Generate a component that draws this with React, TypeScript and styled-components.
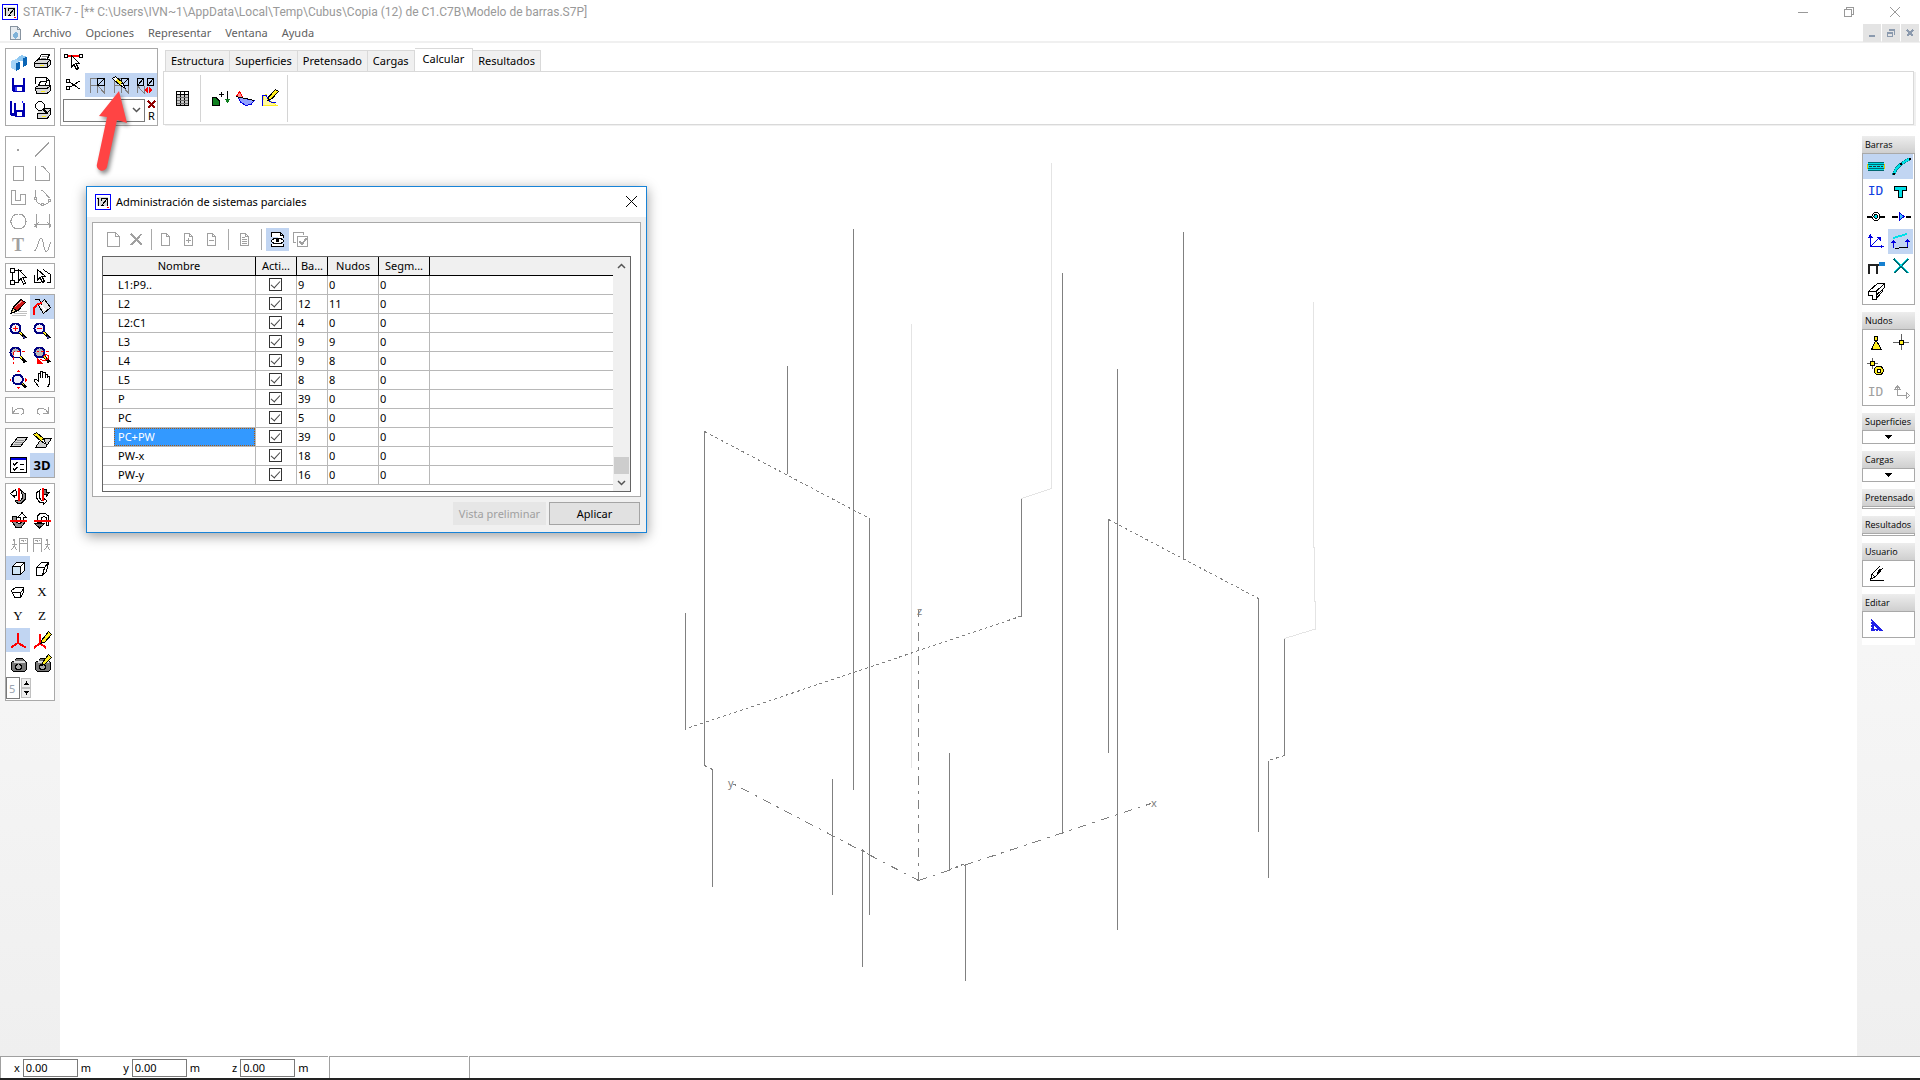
import React, { useState } from "react";
import styled, { createGlobalStyle, css } from "styled-components";

const GREY = "#a0a0a0";
const NAVY = "#000080";
const BLUE = "#0000e0";
const HILITE = "#c1d5f2";

const Global = createGlobalStyle`
  * { box-sizing: border-box; }
  body { margin: 0; background: #fff; color: #000; font: 11px/16px "Noto Sans", "Open Sans", sans-serif; }
  button, input, select { font: inherit; color: inherit; margin: 0; padding: 0; border: 0; background: none; border-radius: 0; }
  h1, h2 { margin: 0; font: inherit; }
  svg { display: block; }
`;

/* ---------- layout ---------- */
const Screen = styled.div`
  position: relative;
  display: flex;
  flex-direction: column;
  min-height: 100vh;
`;
const TitleBar = styled.header`
  display: flex;
  align-items: center;
  gap: 5px;
  height: 23px;
  padding: 0 17px 0 2px;
  color: #999;
  h1 { flex: 1; font-family: Roboto, "Noto Sans", sans-serif; font-size: 12px; }
`;
const WindowButtons = styled.div`
  display: flex;
  gap: 30px;
  button { width: 16px; height: 20px; display: grid; place-items: center; }
`;
const MenuBar = styled.nav`
  display: flex;
  align-items: center;
  height: 20px;
  padding: 1px 1px 0 8px;
  border-bottom: 2px solid #f0f0f0;
  color: #606060;
`;
const MenuItem = styled.button`
  padding: 1px 7px 0;
`;
const ChildButtons = styled.div`
  display: flex;
  gap: 1px;
  margin-left: auto;
  button { width: 18px; height: 18px; background: #e4e4e4; display: grid; place-items: center; }
`;
const Ribbon = styled.div`
  display: flex;
  padding: 5px 4px 0 5px;
  gap: 5px;
`;
const Panel = styled.div<{ $cols?: number }>`
  display: grid;
  grid-template-columns: repeat(${(p) => p.$cols ?? 2}, 24px);
  grid-auto-rows: 24px;
  align-content: start;
  border: 1px solid #a9a9a9;
  background: #fff;
`;
const RibbonPanel = styled(Panel)`
  height: 78px;
`;
const Tool = styled.button<{ $on?: boolean; $w?: number; $h?: number }>`
  display: grid;
  place-items: center;
  width: ${(p) => p.$w ?? 24}px;
  height: ${(p) => p.$h ?? 24}px;
  background: ${(p) => (p.$on ? HILITE : "transparent")};
`;
const ComboRow = styled.div`
  grid-column: 1 / -1;
  display: flex;
  padding: 2px 1px 0 2px;
  gap: 2px;
`;
const Combo = styled.label`
  position: relative;
  width: 83px;
  height: 23px;
  select { appearance: none; width: 100%; height: 100%; border: 1px solid #7a7a7a; background: #fff; }
  svg { position: absolute; right: 4px; top: 8px; pointer-events: none; }
`;
const MiniStack = styled.div`
  display: flex;
  flex-direction: column;
  button { width: 9px; height: 11px; display: grid; place-items: center; line-height: 11px; }
`;
const Tabbed = styled.section`
  flex: 1;
  display: flex;
  flex-direction: column;
`;
const TabList = styled.div`
  display: flex;
  align-items: flex-end;
  height: 23px;
  padding-left: 2px;
`;
const Tab = styled.button<{ $active: boolean }>`
  padding: 0 5px;
  line-height: 20px;
  height: 21px;
  border: 1px solid #d9d9d9;
  border-left-width: 0;
  border-bottom: 0;
  background: #f0f0f0;
  white-space: nowrap;
  &:first-child { border-left-width: 1px; }
  ${(p) => p.$active && css`
    height: 24px;
    margin-bottom: -1px;
    padding: 0 8px 3px;
    background: #fff;
  `}
`;
const TabPane = styled.div`
  display: flex;
  align-items: center;
  height: 54px;
  padding-left: 6px;
  margin-right: 2px;
  border: 1px solid #d9d9d9;
  box-shadow: 2px 1px 0 #f0f0f0;
`;
const PaneRule = styled.span`
  width: 1px;
  height: 47px;
  margin: 0 8px 0 6px;
  background: #d4d4d4;
`;
const Work = styled.main`
  flex: 1;
  display: flex;
  min-height: 0;
  background: linear-gradient(#fff, #efefef);
`;
const LeftBar = styled.aside`
  display: flex;
  flex-direction: column;
  gap: 5px;
  padding: 10px 5px;
`;
const Canvas = styled.section`
  flex: 1;
  position: relative;
  background: #fff;
  > svg { position: absolute; inset: 0; width: 100%; height: 100%; }
`;
const RightBar = styled.aside`
  padding: 10px 5px;
`;
const RightStack = styled.div`
  display: flex;
  flex-direction: column;
  gap: 7px;
  width: 53px;
  padding-bottom: 7px;
  background: #fff;
`;
const GroupTitle = styled.h2`
  height: 17px;
  padding-left: 3px;
  font-family: "Open Sans", sans-serif;
  font-size: 9px;
  line-height: 17px;
  background: linear-gradient(#ededed, #cfcfcf);
`;
const GroupBody = styled.div`
  display: flex;
  flex-wrap: wrap;
  min-height: 3px;
  border: 1px solid #a9a9a9;
`;
const RightTool = styled(Tool)`
  width: 25px;
  height: 25px;
  align-items: start;
`;
const Expand = styled.button`
  width: 100%;
  height: 12px;
  display: grid;
  place-items: center;
`;
const Letter = styled.span<{ $c?: string; $s?: number; $f?: string; $b?: boolean }>`
  color: ${(p) => p.$c ?? "#000"};
  font-family: ${(p) => p.$f ?? '"Liberation Serif"'}, serif;
  font-size: ${(p) => p.$s ?? 13}px;
  font-weight: ${(p) => (p.$b ? 700 : 400)};
  line-height: 24px;
`;
const Spinner = styled.div`
  grid-column: 1 / -1;
  display: flex;
  align-items: center;
  gap: 1px;
  input { width: 14px; height: 22px; border: 1px solid #7a7a7a; padding-left: 2px; color: #9aa4b0; }
  div { display: flex; flex-direction: column; }
  button { width: 10px; height: 10px; border: 1px solid #c0c0c0; background: #eee; display: grid; place-items: center; }
`;

/* ---------- status bar ---------- */
const Status = styled.footer`
  display: flex;
  height: 24px;
  gap: 1px;
  background: #fff;
  border-bottom: 2px solid #222;
`;
const StatusCell = styled.div<{ $w?: number }>`
  display: flex;
  align-items: center;
  gap: 32px;
  ${(p) => (p.$w ? `width: ${p.$w}px;` : "flex: 1;")}
  padding-left: 13px;
  border-top: 1px solid #a0a0a0;
  border-left: 1px solid #a0a0a0;
`;
const Coord = styled.label`
  display: flex;
  align-items: center;
  gap: 3px;
  input { width: 55px; height: 18px; border: 1px solid #7a7a7a; padding-left: 2px; }
`;

/* ---------- dialog ---------- */
const Dialog = styled.section`
  position: absolute;
  left: 86px;
  top: 186px;
  width: 561px;
  border: 1px solid #1883d7;
  background: #f0f0f0;
  box-shadow: 0 3px 12px rgba(0, 0, 0, 0.4);
`;
const DialogTitle = styled.header`
  display: flex;
  align-items: center;
  gap: 5px;
  height: 30px;
  padding: 0 8px 1px;
  background: #fff;
  h2 { flex: 1; }
`;
const DialogGroup = styled.div`
  margin: 5px;
  padding: 5px 9px 4px;
  border: 1px solid #a9a9a9;
  background: #fff;
`;
const DialogTools = styled.div`
  display: flex;
  align-items: center;
  height: 28px;
  padding-bottom: 5px;
`;
const DialogRule = styled.span<{ $tight?: boolean }>`
  width: 1px;
  height: 21px;
  margin: ${(p) => (p.$tight ? "0 2px 0 3px" : "0 4px 0 5px")};
  background: #a9a9a9;
`;
const Grid = styled.div`
  display: flex;
  height: 236px;
  border: 1px solid #646464;
`;
const Table = styled.table`
  flex: 1;
  align-self: flex-start;
  table-layout: fixed;
  border-collapse: separate;
  border-spacing: 0;
  th, td { padding: 0; border-right: 1px solid #b8b8b8; border-bottom: 1px solid #b8b8b8; height: 19px; line-height: 16px; font-weight: 400; text-align: left; white-space: nowrap; overflow: hidden; }
  thead th { background: #f0f0f0; border-color: #000; text-align: center; line-height: 18px; }
  th:last-child, td:last-child { border-right: 0; }
  td { padding: 1px 0 0 1px; vertical-align: top; }
`;
const NameCell = styled.td<{ $sel: boolean }>`
  && { padding: 0 0 0 11px; }
  span { display: block; height: 18px; line-height: 16px; padding-left: 3px; border: 1px solid transparent; }
  ${(p) => p.$sel && css`
    span { background: #3399ff; color: #fff; border: 1px dotted #a85a10; }
  `}
`;
const CheckCell = styled.td`
  && { padding: 2px 1px 0 0; }
`;
const Check = styled.input`
  && { margin: 0 auto; }
  appearance: none;
  display: grid;
  place-items: center;
  width: 13px;
  height: 13px;
  border: 1px solid #333;
  background: #fff;
  &:checked::after {
    content: "";
    width: 4px;
    height: 8px;
    margin-top: -2px;
    border: solid #444;
    border-width: 0 1px 1px 0;
    transform: rotate(42deg);
  }
`;
const Scroll = styled.div`
  display: flex;
  flex-direction: column;
  width: 17px;
  background: #f0f0f0;
  button { height: 17px; display: grid; place-items: center; }
`;
const Thumb = styled.span`
  width: 15px;
  height: 17px;
  margin: auto 1px 0;
  background: #cdcdcd;
`;
const DialogFoot = styled.footer`
  display: flex;
  justify-content: flex-end;
  gap: 3px;
  padding: 0 6px 7px;
`;
const PushButton = styled.button`
  width: 91px;
  height: 23px;
  border: 1px solid #a4a4a4;
  background: #e1e1e1;
  &:disabled { width: 93px; color: #a0a0a0; background: #e6e6e6; border-color: #e6e6e6; }
`;
const Pointer = styled.svg`
  position: absolute;
  left: 90px;
  top: 84px;
  pointer-events: none;
  filter: drop-shadow(2px 3px 2px rgba(0, 0, 0, 0.45));
`;

/* ---------- drawing helpers ---------- */
type Shape = [d: string, stroke?: string, fill?: string, width?: number];
const Draw = ({ s, size = 24, w, h }: { s: Shape[]; size?: number; w?: number; h?: number }) => (
  <svg width={w ?? size} height={h ?? size} viewBox={`0 0 ${w ?? size} ${h ?? size}`} shapeRendering="crispEdges" aria-hidden="true">
    {s.map(([d, stroke = "#000", fill = "none", width = 1], i) => (
      <path key={i} d={d} stroke={stroke} fill={fill} strokeWidth={width} />
    ))}
  </svg>
);

const K = "#000";
const W = "#fff";
const Y = "#ffee20";
const R = "#ff0000";
const C = "#00e0e8";

const printer: Shape[] = [
  ["M8.5 10.5L11.5 5.5H19.5L17 10.5", K, W],
  ["M12 7.5H18M11 9.5H16", "#888"],
  ["M4.5 13.5L8 10.5H19.5L20.5 12.5V15.5L17 18.5H5.5L4.5 17Z", K, "#d8d8d8"],
  ["M5 14.5H16.5L19.5 11.5", K],
  ["M10 16.5H14", Y, "none", 1],
  ["M17.5 14V18", K],
];
const pagePrinter: Shape[] = [
  ["M5.5 11V4.5H16.5L19.5 7.5V12", K, W],
  ["M16.5 4.5V7.5H19.5", K],
  ["M8.5 12.5L10.5 8.5H16.5L15 12.5", K, W],
  ["M5.5 14.5L9 12.5H20.5V17.5L17 20.5H6.5Z", K, "#d8d8d8"],
  ["M6 15.5H17L20 13", K],
  ["M11 18.5H15", Y],
];
const zoomPrinter: Shape[] = [
  ["M10 11.5H20.5V17.5L17 21.5H7.5V16", K, "#d8d8d8"],
  ["M8 16.5H17L20 13", K],
  ["M12 19.5H16", Y],
  ["M8.5 4.5H11.5L14.5 7.5V10.5L11.5 13.5H8.5L5.5 10.5V7.5Z", K, W],
  ["M13 12L17 16", K, "none", 2],
];
const save: Shape[] = [
  ["M6 5H8V12H17V5H19V19H7L6 18Z", "none", "#0000b0"],
  ["M9 14H16V18H9Z", "none", W],
  ["M9 14H11V18H9Z", "none", "#4040ff"],
];
const saveAll: Shape[] = [
  ["M4 4H6V16H8V19H6L4 18Z", "none", "#0000b0"],
  ["M8 6H10V13H17V6H19V20H9L8 19Z", "none", "#0000b0"],
  ["M11 15H16V19H11Z", "none", W],
  ["M16.5 4V6", "#2020ff"],
];
const model: Shape[] = [
  ["M11 9L16 6L21 8V16H17V12L11 12Z", "none", "#8fc8f2"],
  ["M5 12L10 10L14 13V18L9 21L5 19Z", "none", "#a5d4f7"],
  ["M17 9L21 8V16L17 18Z", "none", "#0b65b5"],
  ["M10 14L14 13V20L10 22Z", "none", "#0b65b5"],
];
const cutBar: Shape[] = [
  ["M6 7H19", R, "none", 2],
  ["M3.5 5.5H6.5V8.5H3.5ZM18.5 5.5H21.5V8.5H18.5Z", K, W],
  ["M10.5 6.5V18L13 15.5L15.5 20.5L17.5 19.5L15 14.5H18.5Z", K, W],
];
const scissors: Shape[] = [
  ["M8.5 9L19.5 16.5M8.5 14.5L19.5 7.5", K],
  ["M5.5 6.5H8.5V9.5H5.5ZM5.5 13.5H8.5V16.5H5.5Z", K],
];
const partial: Shape[] = [
  ["M5.5 20V5.5H12M5.5 12.5H12M12.5 12V20M13 13L19.5 20V13", "#808080"],
  ["M12.5 5.5H19.5V12.5H12.5ZM12.5 12.5L19.5 5.5", K],
];
const pencilTL: Shape[] = [
  ["M3.5 5.5L6.5 3.5L13.5 9.5L11.5 12.5Z", K, Y],
  ["M4 5.5L6.5 4L8 6L6 8Z", "none", W],
  ["M11.5 12.5L16 15L13.5 9.5", K, W],
];
const swap: Shape[] = [
  ["M4.5 5.5H10.5V12.5H4.5ZM4.5 12.5L10.5 5.5M14.5 5.5H20.5V12.5H14.5ZM14.5 12.5L20.5 5.5", K],
  ["M4.5 13V20M4.5 13L11 20V13", "#808080"],
  ["M15 14V20L11 17ZM16 14V20L20 17Z", "none", R],
];
const tableIcon: Shape[] = [
  ["M6.5 5.5H18.5V19.5H6.5Z", K, "#c8c8c8"],
  ["M7 6H18V8H7Z", "none", W],
  ["M6 8.5H19M10.5 5V20M14.5 5V20", K],
  ["M7 11.5H18M7 14.5H18M7 17.5H18", "#707070"],
];
const load: Shape[] = [
  ["M3.5 19.5V11.5H7L10.5 15V19.5Z", K, "#108020"],
  ["M9.5 8.5H14.5M12 6V11", K],
  ["M18.5 5V13", K],
  ["M16 13H21L18.5 16Z", "#108020", "#108020"],
];
const moment: Shape[] = [
  ["M3.5 10.5L6.5 5.5L10.5 12.5Z", R, "#ff9090"],
  ["M5 11L21 14.5L18 18.5L13 19.5L8 16.5Z", BLUE, "#90a0ff"],
  ["M3 10.5L21.5 14.5", K],
];
const graph: Shape[] = [
  ["M5.5 19.5L6.5 9.5L9 8.5L11 14L15 16L20 19.5Z", Y, "#fff9a0"],
  ["M5.5 20V9.5H9.5L11.5 14.5L15 16.5L19 17", BLUE],
  ["M18.5 3.5L21.5 5.5L15 12.5L11 14.5L12 10.5Z", K, Y],
];

const gpoint: Shape[] = [["M11 12H13V14H11Z", "none", GREY]];
const gline: Shape[] = [["M5 19.5L19 5.5", GREY]];
const grect: Shape[] = [["M7.5 5.5H17.5V19.5H7.5Z", GREY]];
const gpoly: Shape[] = [["M5.5 5V19.5H19.5V12.5L13 5.5H11", GREY]];
const gU: Shape[] = [["M5.5 5.5H9.5V15.5H14.5V9.5H19.5V19.5H5.5Z", GREY]];
const garc: Shape[] = [
  ["M5.5 5V13M6 15C7 18 9 19.5 12.5 19.5C17 19.5 19.5 18 19.5 15M19.5 13L12.5 5.5H11", GREY],
  ["M4.5 12.5H6.5V14.5H4.5ZM11.5 18.5H13.5V20.5H11.5ZM18.5 14.5H20.5V16.5H18.5Z", GREY, W],
];
const gcircle: Shape[] = [["M12.5 5A7.5 7.5 0 1 1 12.4 5Z", GREY]];
const gdim: Shape[] = [["M6.5 5V19M19.5 5V19M4 15.5H21M4.5 18L8.5 13.5M17.5 13.5L21 17.5", GREY]];
const gwave: Shape[] = [["M4.5 18C8 16 8 5.5 11 5.5C14 5.5 13 18.5 16.5 18.5C18.5 18.5 19 12 20.5 9.5", GREY]];

const arrowCur = "M12.5 5.5V17L15 14.5L17.5 20L19.5 19L17 13.5H20.5Z";
const nodeSel: Shape[] = [
  ["M6.5 8V16M8 6.5H16M8 18.5H13", K],
  ["M4.5 4.5H8.5V8.5H4.5ZM4.5 16.5H8.5V20.5H4.5Z", K, W],
  [arrowCur, K, W],
];
const polySel: Shape[] = [
  ["M4.5 11V18.5H11M13 5.5L20.5 10.5V18.5H17", K],
  ["M7.5 5.5V16L10 13.5L12.5 18.5L14.5 17.5L12 12.5H15.5Z", K, W],
];
const redPen: Shape[] = [
  ["M6 20.5H20M8 18.5H21M12 16.5H21", "#c0c0c0"],
  ["M5 18L7.5 12L15 4.5L19.5 7.5L12 15.5Z", K, "#d01818"],
  ["M9 12L15.5 6", "#ff9a9a"],
  ["M5 18.5L7 13L11 16Z", K, "#f3d9a5"],
];
const bucket: Shape[] = [
  ["M8.5 10.5L14.5 4.5L20.5 12.5L13.5 18.5Z", K, "#e8e8e8"],
  ["M11 10L15 15", W, "none", 2],
  ["M4.5 4.5H9L12 9.5", K],
  ["M4 20V13L7 9.5L12 8", R, "none", 2],
];
const lens: Shape[] = [
  ["M9.5 4.5A5 5 0 1 1 9.4 4.5Z", NAVY, "#f0f0fa", 2],
  ["M14 13.5L19.5 19.5", K, "none", 3],
  ["M13.5 13L16 15.5", Y, "none", 1],
  ["M17 17.5L19 19.5", "#4040a0", "none", 1],
];
const zin: Shape[] = [...lens, ["M7 9.5H12M9.5 7V12", R]];
const zout: Shape[] = [...lens, ["M7 9.5H12", R]];
const lensGrey: Shape[] = [
  ["M9.5 4.5A5 5 0 1 1 9.4 4.5Z", NAVY, "#b8b8b8", 2],
  ["M14 13.5L19.5 19.5", K, "none", 3],
  ["M13.5 13L16 15.5", Y],
];
const zwin: Shape[] = [...lensGrey, ["M8 9H14V14H8Z", "none", W], ["M7.5 8.5H9M11 8.5H14M16 8.5H19M7.5 9V12M7.5 14V17M7.5 19V21", R]];
const zprev: Shape[] = [...lensGrey, ["M7 8.5H9M11 8.5H14M16 8.5H19", R], ["M7 15V20H12Z", R, R], ["M10 16C14 19 20 16 18.5 13C17 11 14 12 13 14", R]];
const zall: Shape[] = [
  ["M12 7.5A5 5 0 1 1 11.9 7.5Z", NAVY, "#f0f0fa", 2],
  ["M16 16.5L20 20.5", K, "none", 3],
  ["M16 16L18 18", Y],
  ["M10 5H14L12 3ZM10 20H14L12 22ZM5 11V15L3 13ZM19 11V15L21 13Z", "none", R],
];
const hand: Shape[] = [
  ["M9.5 20.5L4.5 14.5V12.5H6.5L8.5 14.5V6.5H10.5V11V4.5H12.5V11V5.5H15.5V11V7.5H17.5V11V9.5H19.5V16.5L17.5 20.5", K, W],
];
const undo: Shape[] = [["M6.5 9V15.5H12.5M7 15L9 12L12 10.5H16L17.5 12V15L15 16.5", GREY]];
const redo: Shape[] = [["M18.5 9V15.5H12.5M18 15L16 12L13 10.5H9L7.5 12V15L10 16.5", GREY]];
const plane: Shape[] = [
  ["M4.5 17.5L11.5 8.5H21.5L14.5 17.5Z", K, "#d8d8d8"],
  ["M8 15.5H15M9 13.5H17M11 11.5H18", "#909090"],
];
const planePen: Shape[] = [
  ["M5.5 18.5L11.5 9.5H21.5L15.5 18.5Z", K, "#d0d0d0"],
  ["M3.5 5.5L6.5 3.5L13.5 9.5L11.5 12.5Z", K, Y],
  ["M11.5 12.5L16 15L13.5 9.5", K, W],
];
const winList: Shape[] = [
  ["M4.5 4.5H20.5V19.5H4.5Z", K, W],
  ["M5 6H20", BLUE, "none", 2],
  ["M7 10.5L8.5 12L11.5 9M7 15.5L8.5 17L11.5 14M14 11.5H18M14 16.5H18", K],
];
const rotV = (flip: boolean): Shape[] => [
  flip ? ["M13.5 5.5H16V8H20L16 12.5V10H13.5Z", K, "#707070"] : ["M9.5 5.5L4.5 9.5L8.5 13V11H10.5V8Z", K, W],
  flip ? ["M10 6L6.5 9V14L9.5 18H13.5V20.5L17 17L13.5 14V16H11L9 13Z", K, W] : ["M15 6.5L19.5 10V15L15.5 19H11.5L9 17L12 16H15L17 13Z", K, "#909090"],
  ["M13 4V17", R, "none", 2],
];
const rotH = (flip: boolean): Shape[] => [
  flip
    ? ["M7.5 14V8L10 5.5H15L18.5 8V17H16.5V10L14 8.5L11.5 10V14Z", K, W]
    : ["M6.5 8.5V14L10 19.5H15L18.5 15V13H16L14 16L10.5 14V8.5Z", K, "#909090"],
  flip ? ["M4.5 15.5H14.5L9.5 20Z", K, "#707070"] : ["M12 9.5L16 4.5L20 9.5H17.5V12H14.5V9.5Z", K, W],
  ["M4 13H21", R, "none", 2],
];
const walkL: Shape[] = [
  ["M7 7H9V9H7Z", "none", GREY],
  ["M8.5 9V14L5.5 18M8.5 14L10.5 18M5.5 12H11M13.5 20V6.5H21.5V20M13 11.5H21M15 8.5H17V10M19 8.5H20", GREY],
];
const walkR: Shape[] = [
  ["M16 7H18V9H16Z", "none", GREY],
  ["M17.5 9V14L14.5 18M17.5 14L19.5 18M14.5 12H20M3.5 20V6.5H11.5V20M3 11.5H11M5 8.5H7V10M9 8.5H10", GREY],
];
const cubeA: Shape[] = [
  ["M6.5 10.5L10.5 6.5H18.5V14.5L14.5 18.5H6.5Z", K, W],
  ["M6.5 10.5H14.5V18.5H6.5Z", K, "#cfe4f4"],
  ["M14.5 10.5L18.5 6.5", K],
];
const cubeB: Shape[] = [["M6.5 11.5H14.5L12.5 19.5H6.5ZM6.5 11.5L11.5 6.5H18.5L14.5 11.5M18.5 6.5L16.5 15.5L12.5 19.5", K, W]];
const cubeC: Shape[] = [["M5.5 10.5L9.5 7.5H17.5V12.5L14.5 17.5H8.5ZM5.5 12.5H14.5L17.5 9M14.5 12.5V17", K, W]];
const triad: Shape[] = [["M12 5V15L5 19.5M12 15L20 19.5", R, "none", 2]];
const triadPen: Shape[] = [
  ["M10 6V15L4 20M10 15L16 20", R, "none", 2],
  ["M18.5 3.5L21.5 6.5L15 14L11 15.5L12 12Z", K, Y],
];
const camera: Shape[] = [
  ["M5.5 10.5L8.5 8.5L10.5 6.5H16.5L18.5 8.5L20.5 10.5V17.5L18.5 19.5H7.5L5.5 17.5Z", K, "#777"],
  ["M8 10H19", "#ddd", "none", 2],
  ["M12.5 12A3 3 0 1 1 12.4 12Z", K, "#aaa"],
];
const cameraPen: Shape[] = [...camera, ["M18.5 2.5L21.5 5.5L15 12L12 13.5L13 10Z", K, Y]];

const bar: Shape[] = [
  ["M4 8H20V17H4Z", "none", C],
  ["M5 12.5H8M9 12.5H12M13 12.5H16M17 12.5H19", "#303030"],
  ["M4 8.5H20M4 16.5H20M4 10.5H20M4 14.5H20", "#006870"],
  ["M3.5 10V15M20.5 10V15", "#e0d000"],
];
const curve: Shape[] = [
  ["M4.5 21L7 15L12 10L21 4.5", "#008890", "none", 3],
  ["M4.5 21L7 15L12 10L21 4.5", C, "none", 2],
  ["M4 19H6V21H4ZM11 9H13V11H11ZM20 4H22V6H20Z", "none", K],
];
const teeIcon: Shape[] = [
  ["M5 7H18V12H14V19H9V12H5Z", "none", K],
  ["M6 8H17V11H13V18H10V11H6Z", "none", C],
];
const hinge: Shape[] = [
  ["M3 13H21", K, "none", 2],
  ["M12 8.5A4 4 0 1 1 11.9 8.5Z", K, W],
  ["M12 10.5A2 2 0 1 1 11.9 10.5Z", K, C],
];
const dirIcon: Shape[] = [
  ["M3 13H9M17 13H22", K, "none", 2],
  ["M10.5 9L15 12.5L10.5 16Z", BLUE, "#40c0ff"],
];
const axes: Shape[] = [
  ["M6.5 7V17.5H18M6.5 17.5L15 9", BLUE],
  ["M5 8H8L6.5 6ZM17 16V19L19 17.5ZM13 8H16V11Z", BLUE, BLUE],
];
const lift: Shape[] = [
  ["M4 9L18 5", C, "none", 2],
  ["M6 19.5L19 18", K],
  ["M4.5 19V13M18.5 18V11", BLUE],
  ["M2 14H7L4.5 11ZM16 13H21L18.5 10Z", "none", BLUE],
];
const frame: Shape[] = [
  ["M5 20V11H16M13 11V20", "#222", "none", 2],
  ["M15 8H21V12H15Z", "none", "#1780d0"],
];
const cross: Shape[] = [
  ["M5 5L19 19M19 5L5 19", "#006870", "none", 2],
  ["M6 5L20 19M19 4L5 18", C, "none", 1],
];
const beam3d: Shape[] = [["M4.5 12.5L13.5 4.5H20.5V8.5L12 16.5V20.5H8.5V16.5H4.5ZM4.5 12.5H12V16.5M12 12.5L20.5 4.5M12 20L18 13V10.5", K, W]];
const support: Shape[] = [
  ["M12 10L17.5 19.5H7.5Z", K, Y],
  ["M10.5 6.5H13.5V10.5H10.5Z", K, Y],
];
const nodeCross: Shape[] = [
  ["M4 12.5H20M12.5 4V20", "#606060"],
  ["M10.5 10.5H14.5V14.5H10.5Z", K, Y],
];
const nodeGear: Shape[] = [
  ["M3 8.5H14M8.5 3V14", "#606060"],
  ["M6.5 6.5H10.5V10.5H6.5Z", K, Y],
  ["M15 11A4.5 4.5 0 1 1 14.9 11Z", K, Y],
  ["M13.5 14.5H16.5V17.5H13.5Z", K, W],
];
const gaxes: Shape[] = [["M8.5 6V15.5H18M5.5 9.5L8.5 5.5L11.5 9.5ZM17.5 12.5V18.5L20.5 15.5Z", GREY]];
const pen: Shape[] = [["M6 19.5H20M6.5 18.5L8 13L15.5 5.5M18.5 7.5L11 16L6.5 18.5M8.5 13.5L11 16M13 12L16.5 8", K]];
const square: Shape[] = [
  ["M7 6L19 19H7Z", "none", "#2020e8"],
  ["M10 14L13 17H10Z", "none", W],
  ["M7 9.5H8M7 12.5H8M7 15.5H8M11.5 18V19M14.5 18V19", W],
];

const docNew: Shape[] = [["M5.5 4.5H13.5L17.5 8.5V18.5H5.5ZM13.5 4.5V8.5H17.5", GREY]];
const del: Shape[] = [["M6 6L17 17M16.5 6L6 17", GREY, "none", 2]];
const docSm = "M7.5 5.5H12.5L15.5 8.5V17.5H7.5ZM12.5 5.5V8.5H15.5";
const doc: Shape[] = [[docSm, GREY]];
const docPlus: Shape[] = [[docSm + "M9 12.5H14M11.5 10V15", GREY]];
const docMinus: Shape[] = [[docSm + "M9 12.5H14", GREY]];
const docText: Shape[] = [[docSm + "M9 9.5H12M9 11.5H14M9 13.5H14M9 15.5H14", GREY]];
const docEye: Shape[] = [
  ["M5.5 9V4.5H14.5L17.5 7.5V10M14.5 4.5V7.5H17.5M5.5 16V18.5H17.5V16", K, W],
  ["M5 13L8 10.5H15L18 13L15 15.5H8Z", K, W],
  ["M10 11H13V14H10Z", "none", K],
];
const docCheck: Shape[] = [
  ["M7 14.5H4.5V4.5H14.5V7M8.5 8.5H18.5V18.5H8.5Z", GREY],
  ["M10.5 13L13 16L17.5 10.5", GREY, "none", 2],
];

const Logo = () => (
  <Draw size={16} s={[
    ["M0.5 0.5H15.5V15.5H0.5Z", "#0000ff", W],
    ["M2 3H13V12H2Z", "none", "#dcdcdc"],
    ["M2 4.5H4M3.5 4V12M6 4.5H12M6.5 4V7M12.5 4V12M6 11.5H9M6.5 11.5L12.5 4.5", K],
    ["M12 13.5H14", R],
  ]} />
);

const T = ({ n, s, on, off }: { n: string; s: Shape[]; on?: boolean; off?: boolean }) => (
  <Tool type="button" aria-label={n} $on={on} disabled={off}><Draw s={s} /></Tool>
);
const RT = ({ n, s, on }: { n: string; s: Shape[]; on?: boolean }) => (
  <RightTool type="button" aria-label={n} $on={on}><Draw s={s} /></RightTool>
);
const DT = ({ n, s, on }: { n: string; s: Shape[]; on?: boolean }) => (
  <Tool type="button" aria-label={n} $on={on} $w={23} $h={23}><Draw s={s} size={23} /></Tool>
);
const Tri = ({ up, w = 7 }: { up?: boolean; w?: number }) => (
  <Draw w={w} h={4} s={[[up ? `M0 4H${w}L${w / 2} 0Z` : `M0 0H${w}L${w / 2} 4Z`, "none", K]]} />
);
const Chevron = ({ up }: { up?: boolean }) => (
  <svg width="9" height="6" aria-hidden="true">
    <path d={up ? "M1 5L4.5 1.5L8 5" : "M1 1L4.5 4.5L8 1"} stroke="#555" fill="none" strokeWidth="1.5" />
  </svg>
);
const Group = ({ title, children }: { title: string; children?: React.ReactNode }) => (
  <section>
    <GroupTitle>{title}</GroupTitle>
    <GroupBody>{children}</GroupBody>
  </section>
);

/* ---------- data ---------- */
const rows: [string, number, number, number][] = [
  ["L1:P9..", 9, 0, 0], ["L2", 12, 11, 0], ["L2:C1", 4, 0, 0], ["L3", 9, 9, 0],
  ["L4", 9, 8, 0], ["L5", 8, 8, 0], ["P", 39, 0, 0], ["PC", 5, 0, 0],
  ["PC+PW", 39, 0, 0], ["PW-x", 18, 0, 0], ["PW-y", 16, 0, 0],
];
const columns = ["Nombre", "Acti...", "Ba...", "Nudos", "Segm...", ""];
const widths = [153, 41, 31, 51, 51];
const tabs = ["Estructura", "Superficies", "Pretensado", "Cargas", "Calcular", "Resultados"];

/* Vertical members of the frame: x, top, bottom */
const members = [
  [853, 229, 790], [787, 366, 474], [704, 431, 765], [712, 769, 887], [869, 518, 915],
  [1062, 273, 834], [1183, 232, 559], [1117, 369, 930], [1108, 519, 753], [1258, 598, 832],
  [685, 613, 730], [949, 753, 870], [965, 864, 981], [832, 779, 895], [862, 849, 967],
  [1021, 499, 616], [1284, 639, 756], [1268, 761, 878],
];

const Scene = () => (
  <svg shapeRendering="crispEdges" fill="none" aria-label="Modelo de barras">
    <g transform="translate(-60 -126)">
      <path stroke="#e4e4e4" d="M1051.5 163V488.5L1021.5 498.5M911.5 324V768M1313.5 302V547H1314.5V601H1315.5V629L1284.5 638.5" />
      <path stroke="#808080" d={members.map(([x, a, b]) => `M${x}.5 ${a}V${b}`).join("")} />
      <path stroke="#808080" strokeDasharray="3 3" d="M704.5 431.5L869.5 518.5M1108.5 519.5L1258.5 598.5M1021.5 616L685.5 729M704.5 765.5L712.5 769.5M1284.5 755.5L1268.5 760.5M949.5 869.5L965.5 863.5M862.5 849.5L869.5 855.5" />
      <path stroke="#808080" strokeDasharray="9 6 3 6" d="M918.5 881V610M918.5 880.5L1151 803.5" />
      <path stroke="#808080" strokeDasharray="3 6 9 6" d="M733.5 784L918.5 880.5" />
      <g fill="#808080" fontSize="11">
        <text x="728" y="787">y</text>
        <text x="917" y="615">z</text>
        <text x="1151" y="807">x</text>
      </g>
    </g>
  </svg>
);

export default function App() {
  const [tab, setTab] = useState("Calcular");
  return (
    <Screen>
      <Global />
      <TitleBar>
        <Logo />
        <h1>{"STATIK-7 - [** C:\\Users\\IVN~1\\AppData\\Local\\Temp\\Cubus\\Copia (12) de C1.C7B\\Modelo de barras.S7P]"}</h1>
        <WindowButtons>
          <button type="button" aria-label="Minimizar"><Draw w={10} h={10} s={[["M0 5.5H10", "#999"]]} /></button>
          <button type="button" aria-label="Restaurar"><Draw w={10} h={10} s={[["M0.5 2.5H7.5V9.5H0.5ZM2.5 2V0.5H9.5V7.5H8", "#999"]]} /></button>
          <button type="button" aria-label="Cerrar"><Draw w={10} h={10} s={[["M0 0L10 10M10 0L0 10", "#999"]]} /></button>
        </WindowButtons>
      </TitleBar>
      <MenuBar>
        <Draw w={18} h={16} s={[["M2.5 1.5H9.5L12.5 4.5V14.5H2.5Z", "#8894a0", "#e6ebf0"], ["M9.5 1.5V4.5H12.5", "#8894a0"], ["M5 9L8 7L10 9V12L7 14L5 12Z", "none", "#7fb2d8"]]} />
        {["Archivo", "Opciones", "Representar", "Ventana", "Ayuda"].map((m) => <MenuItem key={m} type="button">{m}</MenuItem>)}
        <ChildButtons>
          <button type="button" aria-label="Minimizar ventana"><Draw w={8} h={8} s={[["M1 7H7", "#8b9aae", "none", 2]]} /></button>
          <button type="button" aria-label="Restaurar ventana"><Draw w={8} h={8} s={[["M0.5 3.5H5.5V7.5H0.5ZM2 1H7.5V6", "#8b9aae", "none"], ["M0 4H6M2 1H8", "#8b9aae", "none", 2]]} /></button>
          <button type="button" aria-label="Cerrar ventana"><Draw w={8} h={8} s={[["M1 1L7 7M7 1L1 7", "#8b9aae", "none", 2]]} /></button>
        </ChildButtons>
      </MenuBar>

      <Ribbon>
        <RibbonPanel>
          <T n="Modelo" s={model} /><T n="Imprimir" s={printer} />
          <T n="Guardar" s={save} /><T n="Imprimir página" s={pagePrinter} />
          <T n="Guardar todo" s={saveAll} /><T n="Vista de impresión" s={zoomPrinter} />
        </RibbonPanel>
        <RibbonPanel $cols={4}>
          <T n="Seleccionar barra" s={cutBar} /><span /><span /><span />
          <T n="Cortar" s={scissors} />
          <T n="Sistema parcial" s={partial} on />
          <T n="Editar sistemas parciales" s={[...partial, ...pencilTL]} on />
          <T n="Intercambiar" s={swap} on />
          <ComboRow>
            <Combo><select aria-label="Sistema parcial activo"><option></option></select><Chevron /></Combo>
            <MiniStack>
              <button type="button" aria-label="Borrar"><Draw w={9} h={9} s={[["M1 1L8 8M8 1L1 8", "#900000", "none", 2]]} /></button>
              <button type="button">R</button>
            </MiniStack>
          </ComboRow>
        </RibbonPanel>
        <Tabbed>
          <TabList role="tablist">
            {tabs.map((t) => (
              <Tab key={t} role="tab" type="button" aria-selected={t === tab} $active={t === tab} onClick={() => setTab(t)}>{t}</Tab>
            ))}
          </TabList>
          <TabPane role="tabpanel">
            <T n="Tabla" s={tableIcon} />
            <PaneRule />
            <T n="Cargas" s={load} /><T n="Esfuerzos" s={moment} /><T n="Envolvente" s={graph} />
            <PaneRule />
          </TabPane>
        </Tabbed>
      </Ribbon>

      <Work>
        <LeftBar>
          <Panel>
            <T n="Punto" s={gpoint} /><T n="Línea" s={gline} />
            <T n="Rectángulo" s={grect} /><T n="Polígono" s={gpoly} />
            <T n="Perfil" s={gU} /><T n="Arco" s={garc} />
            <T n="Círculo" s={gcircle} /><T n="Cota" s={gdim} />
            <Tool type="button"><Letter $c={GREY} $s={18} $b>T</Letter></Tool><T n="Curva" s={gwave} />
          </Panel>
          <Panel><T n="Seleccionar nudos" s={nodeSel} /><T n="Seleccionar polígono" s={polySel} /></Panel>
          <Panel>
            <T n="Lápiz" s={redPen} /><T n="Relleno" s={bucket} on />
            <T n="Ampliar" s={zin} /><T n="Reducir" s={zout} />
            <T n="Ampliar ventana" s={zwin} /><T n="Vista anterior" s={zprev} />
            <T n="Ver todo" s={zall} /><T n="Desplazar" s={hand} />
          </Panel>
          <Panel><T n="Deshacer" s={undo} off /><T n="Rehacer" s={redo} off /></Panel>
          <Panel>
            <T n="Plano" s={plane} /><T n="Editar plano" s={planePen} />
            <T n="Lista" s={winList} />
            <Tool type="button" $on><Letter $f='"Open Sans"' $s={13} $b>3D</Letter></Tool>
          </Panel>
          <Panel>
            <T n="Girar izquierda" s={rotV(false)} /><T n="Girar derecha" s={rotV(true)} />
            <T n="Girar arriba" s={rotH(false)} /><T n="Girar abajo" s={rotH(true)} />
            <T n="Acercarse" s={walkL} off /><T n="Alejarse" s={walkR} off />
            <T n="Vista isométrica" s={cubeA} on /><T n="Vista perspectiva" s={cubeB} />
            <T n="Vista inferior" s={cubeC} /><Tool type="button"><Letter>X</Letter></Tool>
            <Tool type="button"><Letter>Y</Letter></Tool><Tool type="button"><Letter>Z</Letter></Tool>
            <T n="Ejes" s={triad} on /><T n="Editar ejes" s={triadPen} />
            <T n="Cámara" s={camera} /><T n="Editar cámara" s={cameraPen} />
            <Spinner>
              <input aria-label="Factor" defaultValue="5" />
              <div>
                <button type="button" aria-label="Más"><Tri up w={5} /></button>
                <button type="button" aria-label="Menos"><Tri w={5} /></button>
              </div>
            </Spinner>
          </Panel>
        </LeftBar>

        <Canvas><Scene /></Canvas>

        <RightBar>
          <RightStack>
            <Group title="Barras">
              <RT n="Barra" s={bar} on /><RT n="Barra curva" s={curve} on />
              <RightTool type="button"><Letter $c="#1040e0" $f='"DejaVu Sans Mono"' $s={13}>ID</Letter></RightTool><RT n="Sección" s={teeIcon} />
              <RT n="Articulación" s={hinge} /><RT n="Dirección" s={dirIcon} />
              <RT n="Ejes locales" s={axes} /><RT n="Excentricidad" s={lift} on />
              <RT n="Pórtico" s={frame} /><RT n="Cruce" s={cross} />
              <RT n="Viga" s={beam3d} />
            </Group>
            <Group title="Nudos">
              <RT n="Apoyo" s={support} /><RT n="Nudo" s={nodeCross} />
              <RT n="Ajustes de nudo" s={nodeGear} /><RightTool as="span" />
              <RightTool type="button"><Letter $c={GREY} $f='"DejaVu Sans Mono"' $s={13}>ID</Letter></RightTool><RT n="Ejes de nudo" s={gaxes} />
            </Group>
            <Group title="Superficies"><Expand type="button" aria-label="Abrir superficies"><Tri /></Expand></Group>
            <Group title="Cargas"><Expand type="button" aria-label="Abrir cargas"><Tri /></Expand></Group>
            <Group title="Pretensado" />
            <Group title="Resultados" />
            <Group title="Usuario"><RT n="Editar usuario" s={pen} /></Group>
            <Group title="Editar"><RT n="Escuadra" s={square} /></Group>
          </RightStack>
        </RightBar>
      </Work>

      <Status>
        <StatusCell $w={328}>
          {["x", "y", "z"].map((a) => (
            <Coord key={a}>{a}<input defaultValue="0.00" />m</Coord>
          ))}
        </StatusCell>
        <StatusCell $w={139} />
        <StatusCell />
      </Status>

      <Dialog role="dialog" aria-labelledby="dlg">
        <DialogTitle>
          <Logo />
          <h2 id="dlg">Administración de sistemas parciales</h2>
          <button type="button" aria-label="Cerrar diálogo"><Draw w={13} h={11} s={[["M1 0L12 11M12 0L1 11", K]]} /></button>
        </DialogTitle>
        <DialogGroup>
          <DialogTools>
            <DT n="Nuevo" s={docNew} /><DT n="Eliminar" s={del} />
            <DialogRule $tight />
            <DT n="Documento" s={doc} /><DT n="Añadir" s={docPlus} /><DT n="Quitar" s={docMinus} />
            <DialogRule />
            <DT n="Contenido" s={docText} />
            <DialogRule />
            <DT n="Mostrar" s={docEye} on /><DT n="Marcar todo" s={docCheck} />
          </DialogTools>
          <Grid>
            <Table>
              <colgroup>{widths.map((w, i) => <col key={i} style={{ width: w }} />)}<col /></colgroup>
              <thead><tr>{columns.map((c, i) => <th key={i}>{c}</th>)}</tr></thead>
              <tbody>
                {rows.map(([name, bars, nodes, segs]) => (
                  <tr key={name}>
                    <NameCell $sel={name === "PC+PW"}><span>{name}</span></NameCell>
                    <CheckCell><Check type="checkbox" defaultChecked aria-label={`Activar ${name}`} /></CheckCell>
                    <td>{bars}</td><td>{nodes}</td><td>{segs}</td><td />
                  </tr>
                ))}
              </tbody>
            </Table>
            <Scroll>
              <button type="button" aria-label="Subir"><Chevron up /></button>
              <Thumb />
              <button type="button" aria-label="Bajar"><Chevron /></button>
            </Scroll>
          </Grid>
        </DialogGroup>
        <DialogFoot>
          <PushButton type="button" disabled>Vista preliminar</PushButton>
          <PushButton type="button">Aplicar</PushButton>
        </DialogFoot>
      </Dialog>

      <Pointer width="46" height="94" aria-hidden="true">
        <path d="M29 7L9 32L17 33L7 80A5 5 0 0 0 17 83L27 36L37 39Z" fill="#ff4444" />
      </Pointer>
    </Screen>
  );
}
